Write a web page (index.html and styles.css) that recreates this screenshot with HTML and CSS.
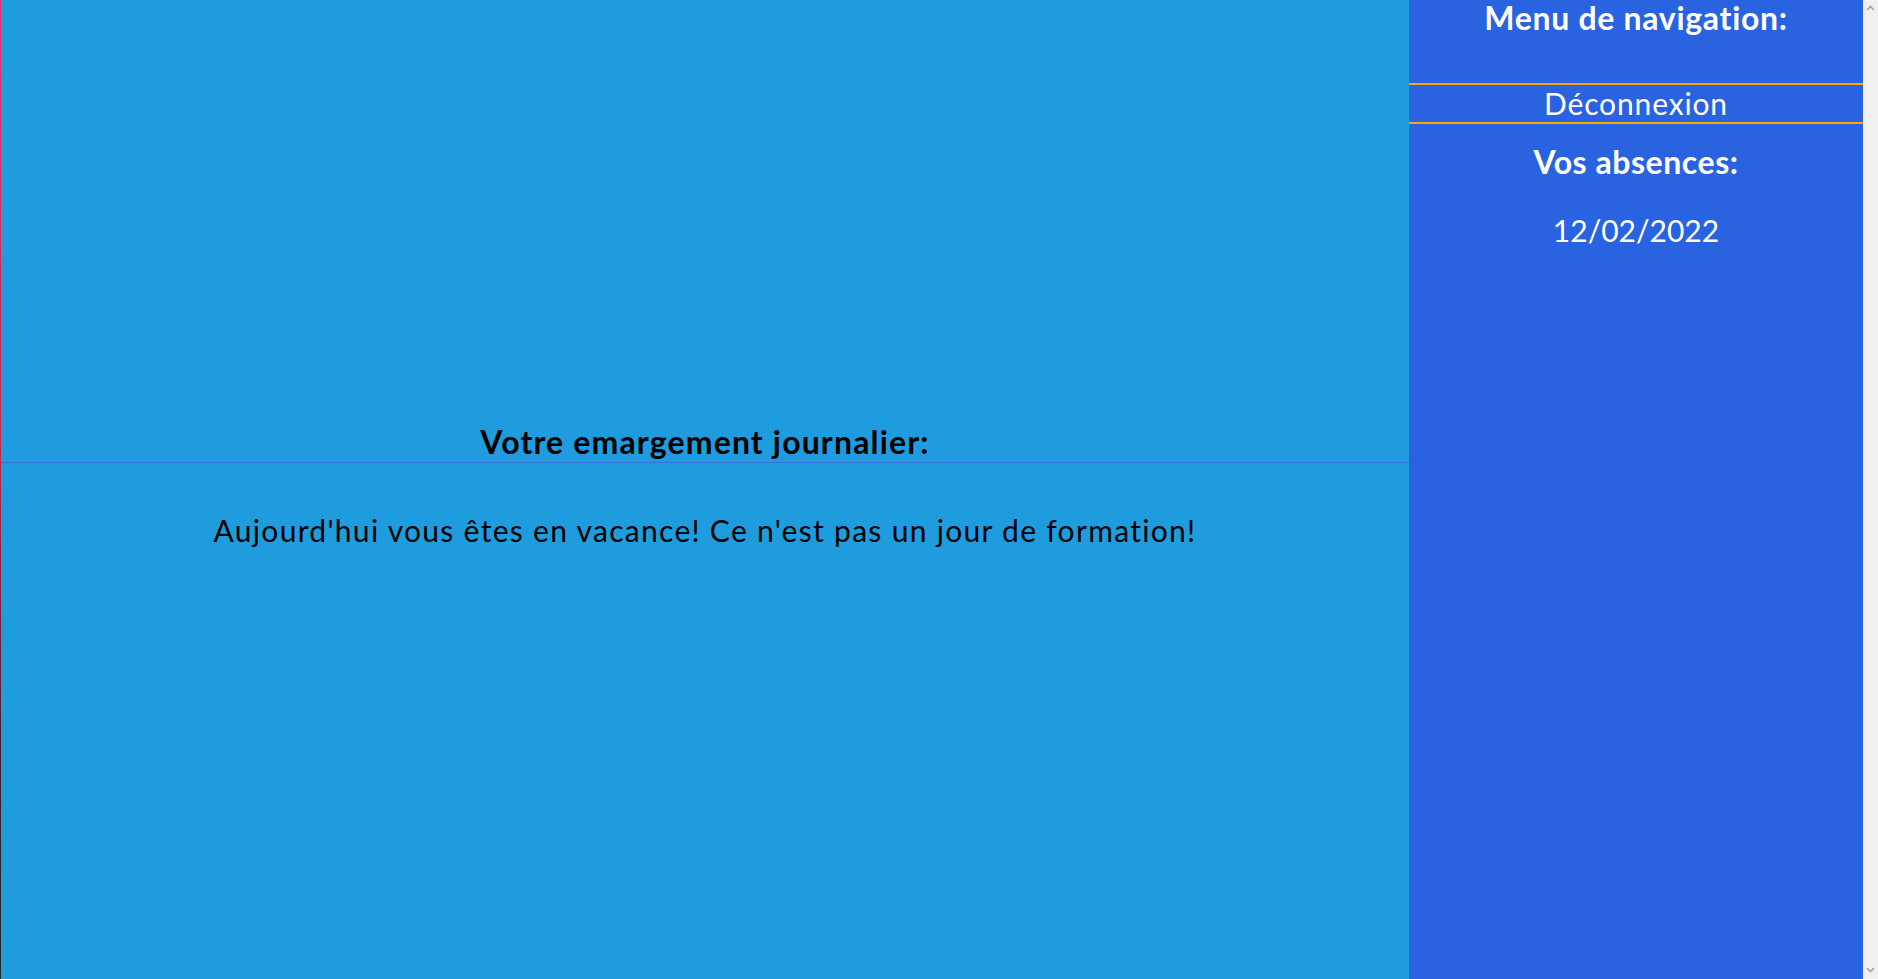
FILE: index.html
```html
<!DOCTYPE html>
<html lang="fr">
<head>
<meta charset="utf-8">
<title>Emargement</title>
<link rel="stylesheet" href="styles.css">
</head>
<body>
<div class="page">
  <div class="edge"></div>
  <main class="main">
    <h2 class="main-title">Votre emargement journalier:</h2>
    <p class="main-text">Aujourd'hui vous êtes en vacance! Ce n'est pas un jour de formation!</p>
  </main>
  <aside class="side">
    <h2 class="side-title">Menu de navigation:</h2>
    <a class="side-link" href="#">Déconnexion</a>
    <h2 class="side-sub">Vos absences:</h2>
    <p class="side-date">12/02/2022</p>
  </aside>
  <div class="scrollbar">
    <svg class="arrow" width="9" height="6" viewBox="0 0 9 6"><path d="M1 5 L4.5 1.5 L8 5" fill="none" stroke="#a3a3a3" stroke-width="1.6"/></svg>
    <svg class="arrow" width="9" height="6" viewBox="0 0 9 6"><path d="M1 1 L4.5 4.5 L8 1" fill="none" stroke="#a3a3a3" stroke-width="1.6"/></svg>
  </div>
</div>
</body>
</html>
```

FILE: styles.css
```css
html, body {
  margin: 0;
  padding: 0;
  height: 100%;
  overflow: hidden;
}
body {
  font-family: Lato, "Open Sans", sans-serif;
  font-variant-ligatures: none;
}
.page {
  display: flex;
  height: 979px;
  width: 1878px;
}
.edge {
  width: 1px;
  flex: none;
  background: linear-gradient(to bottom, #e2336d 0%, #c42a4a 45%, #4a2030 75%, #1a2a2a 100%);
}
.main {
  width: 1408px;
  flex: none;
  background: #1e9cdd;
  color: #000;
}
.main-title {
  margin: 0;
  padding: 424px 0 2px;
  font-size: 32px;
  line-height: 36px;
  font-weight: 700;
  letter-spacing: 1.15px;
  text-align: center;
  border-bottom: 1px solid #3a6fe2;
}
.main-text {
  margin: 49px 0 0;
  font-size: 30px;
  line-height: 36px;
  letter-spacing: 1.3px;
  text-align: center;
}
.side {
  width: 454px;
  flex: none;
  background: #2963e0;
  color: #fff;
  display: flex;
  flex-direction: column;
  text-align: center;
}
.side-title {
  margin: 0;
  padding: 0 0 47px;
  font-size: 32px;
  line-height: 36px;
  font-weight: 700;
  letter-spacing: 0.7px;
}
.side-link {
  display: block;
  color: #fff;
  text-decoration: none;
  font-size: 30px;
  line-height: 37px;
  letter-spacing: 0.85px;
  border-top: 2px solid #ffa500;
  border-bottom: 2px solid #ffa500;
}
.side-sub {
  margin: 20px 0 0;
  font-size: 32px;
  line-height: 36px;
  font-weight: 700;
  letter-spacing: 0.55px;
}
.side-date {
  margin: 32px 0 0;
  font-size: 30px;
  line-height: 36px;
}
.scrollbar {
  width: 15px;
  flex: none;
  background: #f0f0f0;
  display: flex;
  flex-direction: column;
  justify-content: space-between;
  align-items: center;
  padding: 5px 0 6px;
  box-sizing: border-box;
}
.arrow {
  display: block;
}
```
